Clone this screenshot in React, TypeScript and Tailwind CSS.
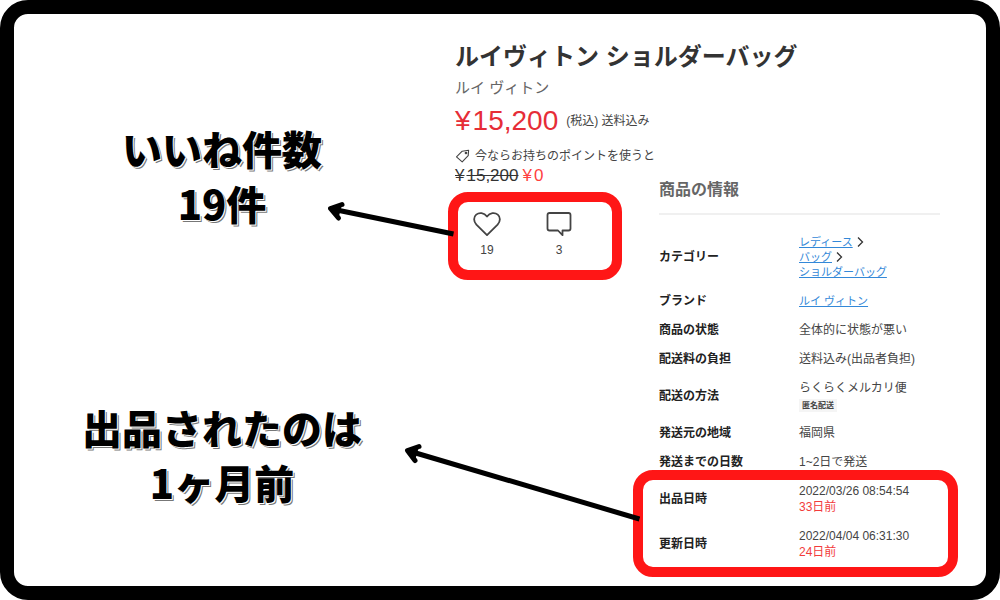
import type { ReactNode } from 'react';

const categories = ['レディース', 'バッグ', 'ショルダーバッグ'];

const dates = [
  { label: '出品日時', date: '2022/03/26 08:54:54', ago: '33日前' },
  { label: '更新日時', date: '2022/04/04 06:31:30', ago: '24日前' },
];

const HeartIcon = () => (
  <svg viewBox="0 0 28 24" className="h-6 w-7" fill="none" stroke="#444" strokeWidth="1.8" strokeLinejoin="round">
    <path d="M14 23.200 L3.400 12.600 C0.400 9.400 0.400 5 3.200 2.600 C6.200 0.200 11 0.400 14 4.600 C17 0.400 21.800 0.200 24.800 2.600 C27.600 5 27.600 9.400 24.600 12.600 Z" />
  </svg>
);

const CommentIcon = () => (
  <svg viewBox="0 0 28 24" className="h-6 w-7" fill="none" stroke="#444" strokeWidth="1.8" strokeLinejoin="round">
    <path d="M4.500 1 H23.500 Q25.500 1 25.500 3 V16.500 Q25.500 18.500 23.500 18.500 H17.500 V23.200 L13 18.500 H4.500 Q2.500 18.500 2.500 16.500 V3 Q2.500 1 4.500 1 Z" />
  </svg>
);

const TagIcon = () => (
  <svg viewBox="0 0 16 16" className="h-4 w-4" fill="none" stroke="#444" strokeWidth="1.1" strokeLinejoin="round">
    <path d="M1.500 8.800 L7.200 3.200 L13.600 2.200 L13.200 7.600 L7.200 13.800 Z" />
    <circle cx="11" cy="5" r="0.8" />
  </svg>
);

const Chevron = () => (
  <svg viewBox="0 0 7 12" className="ml-1 inline h-3 w-[7px] align-[-2px]" fill="none" stroke="#333" strokeWidth="1.3">
    <path d="M1 1.500 L5.500 6 L1 10.500" />
  </svg>
);

const Note = ({ children }: { children: ReactNode }) => (
  <p className="text-center text-[40px] leading-[55px] font-black whitespace-nowrap text-black [text-shadow:1px_1px_0_#fff,2px_2px_0_#777]">
    {children}
  </p>
);

const Row = ({ label, children }: { label: string; children: ReactNode }) => (
  <tr>
    <th scope="row" className="w-[140px] py-[7px] text-left align-middle font-bold text-[#222]">{label}</th>
    <td className="py-[7px] align-middle">{children}</td>
  </tr>
);

const App = () => (
  <div className="bg-white">
    <main className="flex min-h-screen overflow-hidden rounded-[28px] border-[14px] border-black bg-white font-['Liberation_Sans','Noto_Sans_CJK_JP',sans-serif] text-[#444]">
      {/* Notes */}
      <section className="flex-1 pt-[107px] pr-[25px] font-['Noto_Sans_CJK_JP',sans-serif]">
        <Note>いいね件数<br />19件</Note>
        <div className="mt-[169px]">
          <Note>出品されたのは<br />1ヶ月前</Note>
        </div>
      </section>

      {/* Product */}
      <section className="w-[204px] shrink-0 pt-[27px] whitespace-nowrap">
        <h1 className="text-2xl leading-8 font-bold text-[#333]">ルイヴィトン ショルダーバッグ</h1>
        <p className="mt-[5px] text-[15px] leading-5 text-[#666]">ルイ ヴィトン</p>
        <p className="mt-[7px] flex items-center leading-8">
          <span className="mr-[2px] text-[28px] text-[#e62d37]">¥</span>
          <span className="text-[28px] text-[#e62d37]">15,200</span>
          <span className="ml-2 text-xs">(税込) 送料込み</span>
        </p>
        <p className="mt-[11px] flex items-center gap-1 text-xs leading-4"><TagIcon />今ならお持ちのポイントを使うと</p>
        <p className="mt-[2px] flex gap-1 text-[17px] leading-5">
          <s className="text-[#333]"><span className="mr-[2px]">¥</span>15,200</s>
          <span className="text-[#ff3f3f]"><span className="mr-[2px]">¥</span>0</span>
        </p>
        <div className="relative mt-[6px] -ml-[7px] flex w-[174px] gap-11 rounded-[20px] border-[10px] border-[#ff1616] pt-[10px] pb-3 pl-[15px]">
          <button type="button" aria-label="いいね" className="w-7 text-xs">
            <HeartIcon />
            <span className="mt-[6px] block leading-4">19</span>
          </button>
          <button type="button" aria-label="コメント" className="w-7 text-xs">
            <CommentIcon />
            <span className="mt-[6px] block leading-4">3</span>
          </button>
          <svg viewBox="0 0 130 40" className="absolute -top-[2px] -left-[134px] h-10 w-[130px]" fill="none" stroke="#000" strokeWidth="5">
            <path d="M129.500 34 L8 9" />
            <path d="M18 4.500 L6.500 8.500 L14.500 18" fill="#000" strokeLinecap="round" strokeLinejoin="round" />
          </svg>
        </div>
      </section>

      {/* Item info */}
      <section className="mr-[46px] w-[281px] shrink-0 pt-[164px]">
        <h2 className="border-b-2 border-[#f0f0f0] pb-[11px] text-base leading-6 font-bold text-[#666]">商品の情報</h2>
        <table className="mt-[13px] w-full text-xs leading-[15px]">
          <tbody>
            <Row label="カテゴリー">
              {categories.map((name, i) => (
                <div key={name} className="text-[11px]">
                  <a href="#" className="text-[#3388d8] underline">{name}</a>
                  {i < categories.length - 1 && <Chevron />}
                </div>
              ))}
            </Row>
            <Row label="ブランド"><a href="#" className="text-[11px] text-[#3388d8] underline">ルイ ヴィトン</a></Row>
            <Row label="商品の状態">全体的に状態が悪い</Row>
            <Row label="配送料の負担">送料込み(出品者負担)</Row>
            <Row label="配送の方法">
              らくらくメルカリ便
              <div className="mt-[3px] w-fit bg-[#f5f5f5] px-[3px] text-[8px] leading-[13px] font-bold">匿名配送</div>
            </Row>
            <Row label="発送元の地域">福岡県</Row>
            <Row label="発送までの日数">1~2日で発送</Row>
          </tbody>
        </table>
        <div className="relative">
          <table className="w-full text-xs leading-[15px]">
            <tbody>
              {dates.map(({ label, date, ago }) => (
                <Row key={label} label={label}>
                  {date}
                  <div className="mt-px text-[#f23b3b]">{ago}</div>
                </Row>
              ))}
            </tbody>
          </table>
          <div className="absolute -top-[7px] -right-[18px] -bottom-[10px] -left-[26px] rounded-[20px] border-[10px] border-[#ff1616]" />
          <svg viewBox="0 0 240 80" className="absolute -top-[34px] -left-[259px] h-20 w-60" fill="none" stroke="#000" strokeWidth="5">
            <path d="M239.500 76 L9 8" />
            <path d="M19 3.500 L7.500 7.500 L15 17.500" fill="#000" strokeLinecap="round" strokeLinejoin="round" />
          </svg>
        </div>
      </section>
    </main>
  </div>
);

export default App;
